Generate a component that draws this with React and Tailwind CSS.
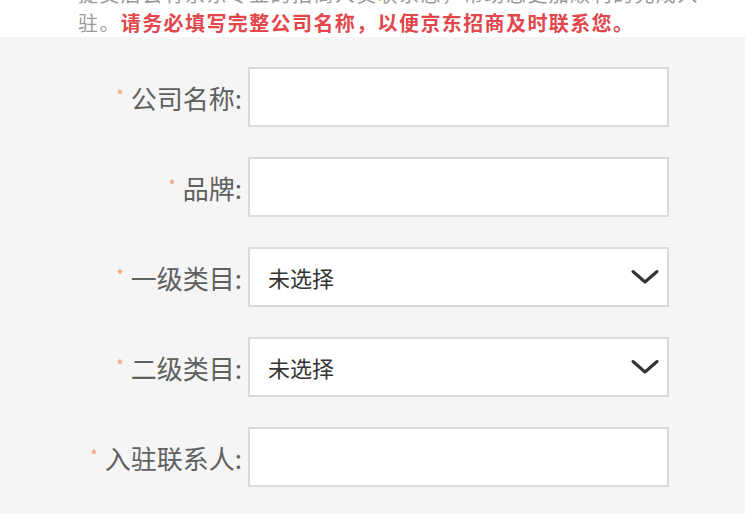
import { useState } from "react";

const fields = [
  { label: "公司名称", type: "input" },
  { label: "品牌", type: "input" },
  { label: "一级类目", type: "select" },
  { label: "二级类目", type: "select" },
  { label: "入驻联系人", type: "input" },
];

function Chevron() {
  return (
    <svg width="28" height="16" viewBox="0 0 28 16" fill="none">
      <path
        d="M2 2.5 L14 13 L26 2.5"
        stroke="#333"
        strokeWidth="3"
        strokeLinecap="round"
        strokeLinejoin="round"
      />
    </svg>
  );
}

export default function App() {
  const [values, setValues] = useState({});

  return (
    <div
      className="w-[745px] h-[514px] overflow-hidden bg-white"
      style={{ fontFamily: '"Noto Sans CJK SC", "Noto Sans", sans-serif' }}
    >
      {/* 提示 */}
      <div className="h-[37px] overflow-hidden">
        <p className="mt-[-21px] pl-[78px] text-[20px] leading-[29px] tracking-[1.4px] text-[#999] whitespace-nowrap">
          提交后会有京东专业的招商人员联系您，帮助您更加顺利的完成入
          <br />
          驻。
          <span className="font-bold text-[#e2474b]">
            请务必填写完整公司名称，以便京东招商及时联系您。
          </span>
        </p>
      </div>

      {/* 表单 */}
      <div className="bg-[#f5f5f5] h-full pt-[30px] flex flex-col gap-[30px]">
        {fields.map((f) => (
          <div key={f.label} className="flex items-center">
            <label className="w-[248px] pr-[6px] flex items-center justify-end text-[26px] text-[#606060]">
              <span className="text-[16px] text-[#f0a070] mr-[7px] -mt-[5px]">*</span>
              {f.label}:
            </label>
            {f.type === "input" ? (
              <input
                type="text"
                value={values[f.label] || ""}
                onChange={(e) => setValues({ ...values, [f.label]: e.target.value })}
                className="w-[421px] h-[60px] bg-white border-2 border-[#dadada] outline-none px-4 text-[22px]"
              />
            ) : (
              <div className="w-[421px] h-[60px] bg-white border-2 border-[#dadada] flex items-center justify-between pl-[18px] pr-[8px]">
                <span className="text-[22px] text-[#333]">未选择</span>
                <Chevron />
              </div>
            )}
          </div>
        ))}
      </div>
    </div>
  );
}
